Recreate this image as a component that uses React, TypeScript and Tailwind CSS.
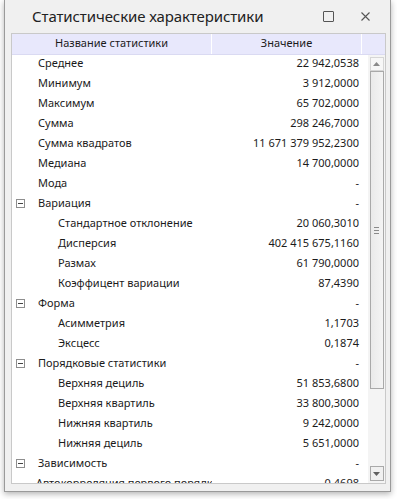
import React from "react";

type Row = { name: string; value: string; level: 0 | 1; group?: boolean };

const ROWS: Row[] = [
  { name: "Среднее", value: "22 942,0538", level: 0 },
  { name: "Минимум", value: "3 912,0000", level: 0 },
  { name: "Максимум", value: "65 702,0000", level: 0 },
  { name: "Сумма", value: "298 246,7000", level: 0 },
  { name: "Сумма квадратов", value: "11 671 379 952,2300", level: 0 },
  { name: "Медиана", value: "14 700,0000", level: 0 },
  { name: "Мода", value: "-", level: 0 },
  { name: "Вариация", value: "-", level: 0, group: true },
  { name: "Стандартное отклонение", value: "20 060,3010", level: 1 },
  { name: "Дисперсия", value: "402 415 675,1160", level: 1 },
  { name: "Размах", value: "61 790,0000", level: 1 },
  { name: "Коэффицент вариации", value: "87,4390", level: 1 },
  { name: "Форма", value: "-", level: 0, group: true },
  { name: "Асимметрия", value: "1,1703", level: 1 },
  { name: "Эксцесс", value: "0,1874", level: 1 },
  { name: "Порядковые статистики", value: "-", level: 0, group: true },
  { name: "Верхняя дециль", value: "51 853,6800", level: 1 },
  { name: "Верхняя квартиль", value: "33 800,3000", level: 1 },
  { name: "Нижняя квартиль", value: "9 242,0000", level: 1 },
  { name: "Нижняя дециль", value: "5 651,0000", level: 1 },
  { name: "Зависимость", value: "-", level: 0, group: true },
  { name: "Автокорреляция первого порядка", value: "-0,4698", level: 1 },
];

function MinusBox() {
  return (
    <span className="w-[9px] h-[9px] border border-[#8e8e8e] bg-white flex items-center justify-center">
      <span className="w-[5px] h-px bg-[#444]" />
    </span>
  );
}

function Arrow({ up }: { up?: boolean }) {
  return (
    <svg width="7" height="4" viewBox="0 0 7 4">
      {up ? <path d="M0 4 L3.5 0 L7 4 Z" fill="#8a8a8a" /> : <path d="M0 0 L7 0 L3.5 4 Z" fill="#606060" />}
    </svg>
  );
}

export default function App() {
  return (
    <div
      className="w-[397px] h-[499px] bg-white pl-[4px] pr-[6px] pb-[7px] text-[#1b1b1b]"
      style={{ fontFamily: '"Noto Sans", "Open Sans", sans-serif' }}
    >
      <div className="w-full h-full bg-[#f0f0f0] border-x border-b border-[#9a9a9a] shadow-[0_2px_6px_rgba(0,0,0,0.3)] flex flex-col">
        {/* Title bar */}
        <div className="h-[33px] flex items-center pl-[27px] pr-[20px] shrink-0">
          <span className="text-[15px] leading-none tracking-[-0.1px] text-[#222] -mt-[1px]">
            Статистические характеристики
          </span>
          <div className="ml-auto flex items-center gap-[27px]">
            <span className="w-[11px] h-[11px] border border-[#555] rounded-[1px]" />
            <svg width="9" height="9" viewBox="0 0 9 9">
              <path d="M0.5 0.5 L8.5 8.5 M8.5 0.5 L0.5 8.5" stroke="#555" strokeWidth="1.1" />
            </svg>
          </div>
        </div>

        {/* Table */}
        <div className="ml-[6px] mr-[4px] h-[451px] border border-[#c9c9c9] bg-white flex flex-col overflow-hidden">
          <div className="h-[21px] bg-[#e8e8fc] border-b border-[#dadaf2] flex text-[11px] shrink-0">
            <div className="w-[200px] flex items-center justify-center border-r border-white pb-[1px]">
              Название статистики
            </div>
            <div className="w-[150px] flex items-center justify-center border-r border-white pb-[1px]">
              Значение
            </div>
            <div className="flex-1" />
          </div>
          <div className="flex flex-1 min-h-0">
            <div className="flex-1 overflow-hidden text-[11px]">
              {ROWS.map((r) => (
                <div key={r.name} className="h-[20px] flex items-center pb-[3px]">
                  <div className="w-[200px] flex items-center whitespace-nowrap overflow-hidden">
                    <span className="w-[26px] pl-[4px] flex items-center">{r.group && <MinusBox />}</span>
                    <span className={r.level === 1 ? "pl-[20px]" : ""}>{r.name}</span>
                  </div>
                  <div className="w-[150px] text-right pr-[3px] whitespace-nowrap">{r.value}</div>
                </div>
              ))}
            </div>
            {/* Scrollbar */}
            <div className="w-[17px] bg-[#f4f4f4] flex flex-col items-center pt-[2px] pb-[2px] shrink-0">
              <div className="w-[14px] h-[14px] border border-[#d6d6d6] bg-[#f7f7f7] flex items-center justify-center">
                <Arrow up />
              </div>
              <div className="w-[14px] h-[318px] border border-[#a9a9a9] bg-gradient-to-r from-[#eaeaea] to-[#f4f4f4] flex flex-col items-center justify-center gap-[2px]">
                <span className="w-[5px] h-px bg-[#8a8a8a]" />
                <span className="w-[5px] h-px bg-[#8a8a8a]" />
                <span className="w-[5px] h-px bg-[#8a8a8a]" />
              </div>
              <div className="flex-1" />
              <div className="w-[14px] h-[15px] border border-[#a9a9a9] bg-[#f0f0f0] flex items-center justify-center">
                <Arrow />
              </div>
            </div>
          </div>
        </div>
      </div>
    </div>
  );
}
